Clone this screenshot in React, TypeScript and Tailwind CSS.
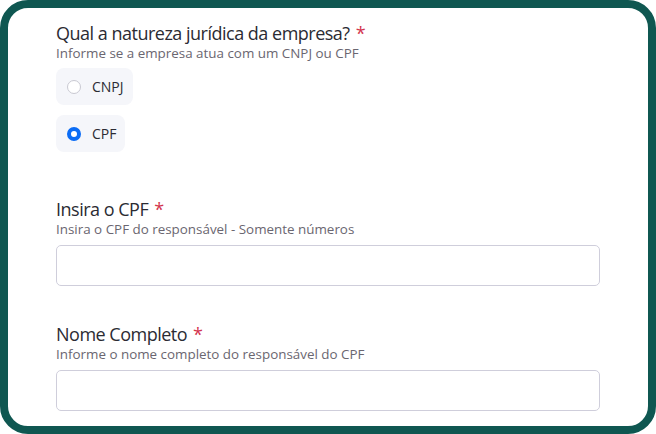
import React from "react";

function Radio({ label, checked }: { label: string; checked?: boolean }) {
  return (
    <div className="flex items-center h-[37px] rounded-[8px] bg-[#f5f6fa] pl-[11px] pr-[9px] w-fit">
      {checked ? (
        <span className="w-[14px] h-[14px] rounded-full border-[4px] border-[#0b6cf5] bg-white box-border" />
      ) : (
        <span className="w-[14px] h-[14px] rounded-full border border-[#c9c9d2] bg-white box-border" />
      )}
      <span className="ml-[11px] text-[14px] text-[#2b2b33]">{label}</span>
    </div>
  );
}

function Title({ text }: { text: string }) {
  return (
    <div className="text-[18px] leading-[22px] text-[#2b2b33] tracking-[-0.5px]">
      {text}
      <span className="ml-[6px] text-[#d3344d] tracking-normal">*</span>
    </div>
  );
}

function Field({ title, hint }: { title: string; hint: string }) {
  return (
    <div className="flex flex-col">
      <Title text={title} />
      <div className="text-[13.4px] leading-[18px] text-[#6a6670]">{hint}</div>
      <div className="mt-[7px] h-[41px] w-[544px] rounded-[5px] border border-[#cfcedb] bg-white" />
    </div>
  );
}

export default function App() {
  return (
    <div className="w-[656px] h-[434px] bg-white" style={{ fontFamily: '"Open Sans", sans-serif' }}>
      <div className="w-[656px] h-[434px] rounded-[28px] border-[8px] border-[#0f5751] bg-white overflow-hidden box-border">
        <div className="pl-[48px] pt-[14px] flex flex-col">
          <Title text="Qual a natureza jurídica da empresa?" />
          <div className="text-[13.4px] leading-[18px] text-[#6a6670]">
            Informe se a empresa atua com um CNPJ ou CPF
          </div>
          <div className="mt-[6px] flex flex-col gap-[10px]">
            <Radio label="CNPJ" />
            <Radio label="CPF" checked />
          </div>
          <div className="mt-[46px]">
            <Field title="Insira o CPF" hint="Insira o CPF do responsável - Somente números" />
          </div>
          <div className="mt-[37px]">
            <Field title="Nome Completo" hint="Informe o nome completo do responsável do CPF" />
          </div>
        </div>
      </div>
    </div>
  );
}
